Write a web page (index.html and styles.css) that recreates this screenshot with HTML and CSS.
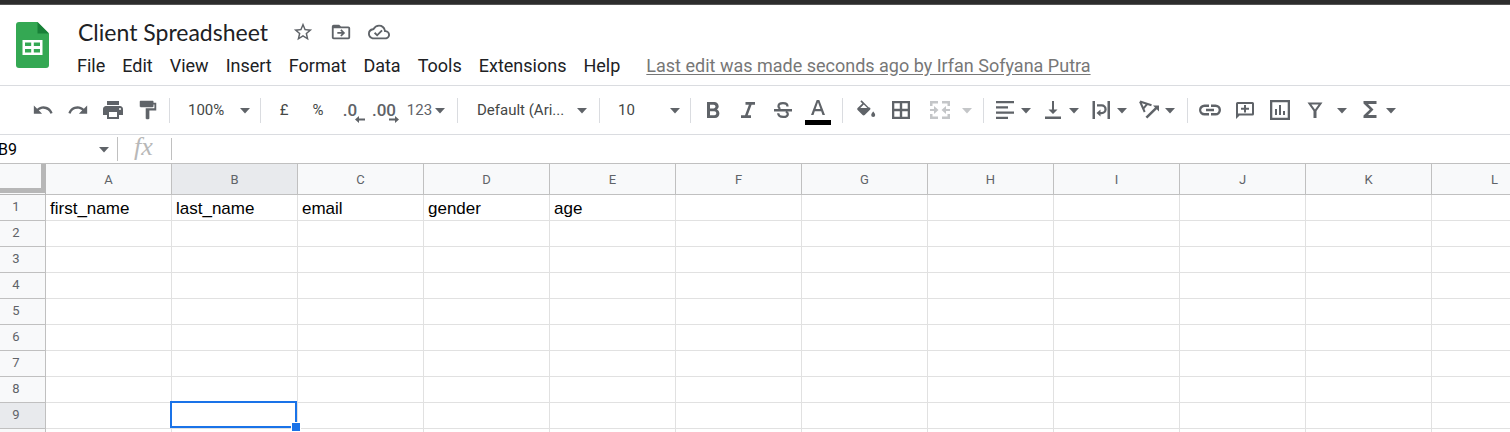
FILE: index.html
```
<!DOCTYPE html>
<html lang="en">
<head>
<meta charset="utf-8">
<title>Client Spreadsheet</title>
<link rel="stylesheet" href="styles.css">
</head>
<body>
<svg width="0" height="0" class="defs" aria-hidden="true">
  <symbol id="caret" viewBox="0 0 10 6"><path d="M0 0h10L5 5.5z"/></symbol>
</svg>
<div class="window-edge"></div>
<header class="header">
  <svg class="logo" viewBox="0 0 33 46" role="img" aria-label="Sheets">
    <path fill="#34a853" d="M3 0h18.500L33 11.500V43a3 3 0 0 1-3 3H3a3 3 0 0 1-3-3V3a3 3 0 0 1 3-3z"/>
    <path fill="#188038" d="M21.500 0L33 11.500H21.500z"/>
    <path fill="#fff" fill-rule="evenodd" d="M6.500 18h20v15h-20zM9 20.500v3.500h6.200v-3.500zM17.800 20.500v3.500H24v-3.500zM9 27v3.500h6.200V27zM17.800 27v3.500H24V27z"/>
  </svg>
  <div class="heading">
    <div class="title-row">
      <h1 class="title">Client Spreadsheet</h1>
      <button class="title-btn" aria-label="Star"><svg viewBox="0 0 24 24"><path d="M22 9.240l-7.190-.62L12 2 9.190 8.630 2 9.240l5.460 4.730L5.820 21 12 17.270 18.180 21l-1.630-7.030L22 9.240zM12 15.400l-3.760 2.270 1-4.280-3.320-2.880 4.380-.38L12 6.100l1.710 4.040 4.380.38-3.320 2.880 1 4.280L12 15.400z"/></svg></button>
      <button class="title-btn" aria-label="Move"><svg viewBox="0 0 24 24"><path d="M20 6h-8l-2-2H4a2 2 0 0 0-2 2v12a2 2 0 0 0 2 2h16a2 2 0 0 0 2-2V8a2 2 0 0 0-2-2zm0 12H4V8h16v10zm-7.500-1l4-4-4-4-1.300 1.300 1.700 1.700H8v2h4.900l-1.700 1.700z"/></svg></button>
      <button class="title-btn" aria-label="Document status"><svg viewBox="0 0 24 24"><path d="M19.350 10.040A7.490 7.490 0 0 0 12 4C9.110 4 6.600 5.640 5.350 8.040A5.994 5.994 0 0 0 0 14c0 3.310 2.690 6 6 6h13c2.760 0 5-2.240 5-5 0-2.640-2.050-4.780-4.650-4.960zM19 18H6c-2.210 0-4-1.790-4-4 0-2.050 1.530-3.760 3.560-3.970l1.070-.11.5-.95A5.469 5.469 0 0 1 12 6c2.620 0 4.880 1.860 5.390 4.430l.3 1.500 1.530.11A2.980 2.980 0 0 1 22 15c0 1.650-1.350 3-3 3zm-9-3.820l-2.090-2.090L6.500 13.500 10 17l6.010-6.010-1.410-1.410z"/></svg></button>
    </div>
    <nav class="menu">
      <button>File</button><button>Edit</button><button>View</button><button>Insert</button><button>Format</button><button>Data</button><button>Tools</button><button>Extensions</button><button>Help</button>
      <a class="last-edit" href="#">Last edit was made seconds ago by Irfan Sofyana Putra</a>
    </nav>
  </div>
</header>

<div class="toolbar" role="toolbar">
  <button class="tool" aria-label="Undo"><svg class="icon small" viewBox="0 0 24 24"><path d="M12.500 8c-2.650 0-5.050.99-6.900 2.600L2 7v9h9l-3.620-3.620c1.390-1.160 3.160-1.880 5.120-1.880 3.540 0 6.550 2.310 7.600 5.500l2.370-.78C21.080 11.030 17.150 8 12.500 8z"/></svg></button>
  <button class="tool" aria-label="Redo"><svg class="icon small" viewBox="0 0 24 24"><path d="M18.400 10.600C16.550 8.990 14.150 8 11.500 8c-4.650 0-8.580 3.030-9.960 7.220L3.900 16a8.002 8.002 0 0 1 7.600-5.500c1.950 0 3.730.72 5.120 1.880L13 16h9V7l-3.600 3.600z"/></svg></button>
  <button class="tool" aria-label="Print"><svg class="icon" viewBox="0 0 24 24"><path d="M19 8H5c-1.660 0-3 1.340-3 3v6h4v4h12v-4h4v-6c0-1.660-1.340-3-3-3zm-3 11H8v-5h8v5zm3-7a1 1 0 1 1 0-2 1 1 0 0 1 0 2zM18 3H6v4h12V3z"/></svg></button>
  <button class="tool" aria-label="Paint format"><svg class="icon small" viewBox="0 0 24 24"><path d="M18 4V3c0-.55-.45-1-1-1H4c-.55 0-1 .45-1 1v5c0 .55.450 1 1 1h13c.55 0 1-.45 1-1V6h1v4H9.500v11c0 .55.450 1 1 1h2c.55 0 1-.45 1-1v-8.500H21V4h-3z"/></svg></button>
  <span class="sep"></span>
  <button class="tool picker">100%<svg class="caret"><use href="#caret"/></svg></button>
  <span class="sep"></span>
  <div class="group numbers">
    <button class="tool">£</button>
    <button class="tool">%</button>
    <button class="tool decimals" aria-label="Decrease decimal places"><span>.0</span><svg class="arrow" viewBox="0 0 10 7"><path d="M10 2.500H4V0L0 3.500 4 7V4.500h6z"/></svg></button>
    <button class="tool decimals" aria-label="Increase decimal places"><span>.00</span><svg class="arrow" viewBox="0 0 10 7"><path d="M0 2.500h6V0l4 3.500L6 7V4.500H0z"/></svg></button>
  </div>
  <button class="tool formats">123<svg class="caret"><use href="#caret"/></svg></button>
  <span class="sep"></span>
  <button class="tool picker font">Default (Ari...<svg class="caret"><use href="#caret"/></svg></button>
  <span class="sep"></span>
  <button class="tool picker">10<svg class="caret"><use href="#caret"/></svg></button>
  <span class="sep"></span>
  <div class="group text-style">
    <button class="tool" aria-label="Bold"><svg class="icon" viewBox="0 0 24 24"><path d="M16 11.500c1-.7 1.700-1.800 1.700-2.900C17.700 6 15.800 4 13.200 4H6v16h8c2.500 0 4.400-2 4.400-4.500 0-1.800-1-3.300-2.400-4zM9 6.700h3.600c1 0 1.900.8 1.900 1.900s-.9 1.900-1.900 1.900H9zm4.300 10.600H9v-4h4.300c1.100 0 2 .9 2 2s-.9 2-2 2z"/></svg></button>
    <button class="tool" aria-label="Italic"><svg class="icon" viewBox="0 0 24 24"><path d="M9.500 4v2.700h3.400L9 17.300H5V20h10v-2.700h-3.300l3.900-10.600H19V4z"/></svg></button>
    <button class="tool" aria-label="Strikethrough"><svg class="icon" viewBox="0 0 24 24"><path d="M3 11h18v2.500H3z"/><path d="M16.500 8.500c0-2-1.700-3.300-4.500-3.300S7.500 6.500 7.500 8.300c0 1.300.6 2 1.700 2.700M14.800 13.500c1.300.5 2 1.200 2 2.400 0 1.800-1.900 3-4.600 3-3 0-4.900-1.300-5-3.600" fill="none" stroke="currentColor" stroke-width="2.300"/></svg></button>
    <button class="tool" aria-label="Text color"><svg class="icon tall" viewBox="0 0 26 30"><path d="M11.700 5L6 20h2.500l1.300-3.700h6.400l1.300 3.700H20L14.300 5h-2.600zm-1.100 9L13 7.300l2.400 6.700z"/><path fill="#000" d="M0 25h26v5H0z"/></svg></button>
  </div>
  <span class="sep"></span>
  <div class="group cell-style">
    <button class="tool" aria-label="Fill color"><svg class="icon" viewBox="0 0 24 24"><path d="M14.500 9.200L7.600 2.300 6.400 3.500l2 2L3.600 10a1.400 1.400 0 0 0 0 2l5 5c.6.600 1.500.6 2.100 0l5.300-5.200c.6-.6.6-1.400 0-2zM6.300 10l3.500-3.400L13.300 10zM19.200 13.500s-2 2.100-2 3.400a2 2 0 0 0 4 0c0-1.300-2-3.400-2-3.400z"/></svg></button>
    <button class="tool" aria-label="Borders"><svg class="icon" viewBox="0 0 24 24"><path d="M3 3v18h18V3H3zm7.800 15.700H5.300v-5.500h5.500v5.500zm0-7.900H5.300V5.300h5.500v5.500zm7.900 7.900h-5.500v-5.500h5.500v5.500zm0-7.900h-5.500V5.300h5.500v5.500z"/></svg></button>
    <button class="tool split merge" disabled aria-label="Merge cells"><svg class="icon" viewBox="0 0 24 24"><path d="M2 3h8v2.500H4.500V8H2zM14 3h8v5h-2.500V5.500H14zM2 16h2.500v2.500H10V21H2zM19.500 16H22v5h-8v-2.500h5.500zM2 11h4V8l4.500 4L6 16v-3H2zM22 11h-4V8l-4.500 4 4.500 4v-3h4z"/></svg><svg class="caret"><use href="#caret"/></svg></button>
  </div>
  <span class="sep"></span>
  <div class="group alignment">
    <button class="tool split" aria-label="Horizontal align"><svg class="icon" viewBox="0 0 24 24"><path d="M3 3h18v2.300H3zM3 8.200h12v2.300H3zM3 13.400h18v2.300H3zM3 18.700h12V21H3z"/></svg><svg class="caret"><use href="#caret"/></svg></button>
    <button class="tool split" aria-label="Vertical align"><svg class="icon" viewBox="0 0 24 24"><path d="M4 18.500h16V21H4zM11 3h2v8.500h3.500L12 16l-4.500-4.500H11z"/></svg><svg class="caret"><use href="#caret"/></svg></button>
    <button class="tool split" aria-label="Text wrapping"><svg class="icon" viewBox="0 0 24 24"><path d="M3.500 3H6v18H3.500zM18.500 3H21v18h-2.500zM7.500 15l4-3.500v2.400h1.200a2.700 2.700 0 0 0 0-5.400H8V6.200h4.700a5 5 0 0 1 0 10h-1.200v2.300z"/></svg><svg class="caret"><use href="#caret"/></svg></button>
    <button class="tool split" aria-label="Text rotation"><svg class="icon" viewBox="0 0 24 24"><path d="M3 3.500l11.500 3.800M3 3.500l4.700 10.500M10.300 5.900l-4.400 5.300" fill="none" stroke="currentColor" stroke-width="2"/><path d="M8.500 18.700l9.500-9.300-2-2h6v6l-2.200-2.200-9.500 9.300z"/></svg><svg class="caret"><use href="#caret"/></svg></button>
  </div>
  <span class="sep"></span>
  <button class="tool" aria-label="Insert link"><svg class="icon" viewBox="0 0 24 24"><path d="M3.200 12c0-1.700 1.600-3.100 3.300-3.100H11V6.500H6.500a5.500 5.500 0 0 0 0 11H11v-2.400H6.500c-1.700 0-3.300-1.400-3.300-3.100zM8 13.200h8v-2.400H8zM17.500 6.500H13v2.400h4.500a3.100 3.100 0 0 1 0 6.200H13v2.400h4.500a5.500 5.500 0 0 0 0-11z"/></svg></button>
  <button class="tool" aria-label="Insert comment"><svg class="icon" viewBox="0 0 24 24"><path d="M19.500 4h-15A1.500 1.500 0 0 0 3 5.500V21l3.500-3.500h13A1.500 1.500 0 0 0 21 16V5.500A1.500 1.500 0 0 0 19.500 4zM19 15.500H5V6h14zM11 14.500h2v-2.800h3v-2h-3V7h-2v2.700H8v2h3z"/></svg></button>
  <button class="tool" aria-label="Insert chart"><svg class="icon" viewBox="0 0 24 24"><path d="M7 11h2v6H7zM11 7h2v10h-2zM15 13h2v4h-2zM2 2v20h20V2zm17.700 17.700H4.300V4.300h15.400z"/></svg></button>
  <button class="tool split filter" aria-label="Filter"><svg class="icon" viewBox="0 0 24 24"><path d="M4.500 4.500h15L13.500 13v7h-3v-7zM8.400 6.600l3.600 5 3.600-5z"/></svg><svg class="caret"><use href="#caret"/></svg></button>
  <button class="tool split" aria-label="Functions"><svg class="icon" viewBox="0 0 24 24"><path d="M18.500 3H5.500v2.400l6.300 6.100-6.300 6.100V20h13v-3H10l5.500-5.500L10 6h8.500z"/></svg><svg class="caret"><use href="#caret"/></svg></button>
</div>

<div class="formula-bar">
  <label class="name-box"><input value="B9" aria-label="Name box"><svg class="caret"><use href="#caret"/></svg></label>
  <label class="fx" for="formula">fx</label>
  <input class="formula" id="formula">
</div>

<main class="sheet">
  <table class="grid">
    <colgroup><col class="row-col"><col span="12"></colgroup>
    <thead>
      <tr><td class="corner"></td><th>A</th><th class="active">B</th><th>C</th><th>D</th><th>E</th><th>F</th><th>G</th><th>H</th><th>I</th><th>J</th><th>K</th><th>L</th></tr>
    </thead>
    <tbody>
      <tr><th>1</th><td>first_name</td><td>last_name</td><td>email</td><td>gender</td><td>age</td><td></td><td></td><td></td><td></td><td></td><td></td><td></td></tr>
      <tr><th>2</th><td></td><td></td><td></td><td></td><td></td><td></td><td></td><td></td><td></td><td></td><td></td><td></td></tr>
      <tr><th>3</th><td></td><td></td><td></td><td></td><td></td><td></td><td></td><td></td><td></td><td></td><td></td><td></td></tr>
      <tr><th>4</th><td></td><td></td><td></td><td></td><td></td><td></td><td></td><td></td><td></td><td></td><td></td><td></td></tr>
      <tr><th>5</th><td></td><td></td><td></td><td></td><td></td><td></td><td></td><td></td><td></td><td></td><td></td><td></td></tr>
      <tr><th>6</th><td></td><td></td><td></td><td></td><td></td><td></td><td></td><td></td><td></td><td></td><td></td><td></td></tr>
      <tr><th>7</th><td></td><td></td><td></td><td></td><td></td><td></td><td></td><td></td><td></td><td></td><td></td><td></td></tr>
      <tr><th>8</th><td></td><td></td><td></td><td></td><td></td><td></td><td></td><td></td><td></td><td></td><td></td><td></td></tr>
      <tr><th class="active">9</th><td></td><td class="selected"></td><td></td><td></td><td></td><td></td><td></td><td></td><td></td><td></td><td></td><td></td></tr>
      <tr><th></th><td></td><td></td><td></td><td></td><td></td><td></td><td></td><td></td><td></td><td></td><td></td><td></td></tr>
    </tbody>
  </table>
</main>
</body>
</html>
```
FILE: styles.css
```
*, *::before, *::after { box-sizing: border-box; }

body {
  display: flex;
  flex-direction: column;
  height: 100vh;
  margin: 0;
  overflow: hidden;
  background: #fff;
  color: #202124;
  font-family: Roboto, "Liberation Sans", sans-serif;
}

.defs { position: absolute; }

button {
  margin: 0;
  padding: 0;
  border: 0;
  background: none;
  color: inherit;
  font: inherit;
  white-space: nowrap;
}

svg { display: block; flex: none; fill: currentColor; }

.window-edge {
  flex: none;
  height: 5px;
  background: #2d2d2d;
  border-bottom: 1px solid #555;
}

/* Title and menus */
.header {
  display: flex;
  flex: none;
  align-items: flex-start;
  height: 81px;
  padding-left: 16px;
  border-bottom: 1px solid #dadce0;
}

.logo { width: 33px; height: 46px; margin-top: 17px; }

.heading { padding: 10px 0 0 28px; }

.title-row { display: flex; align-items: center; height: 34px; color: #5f6368; }

.title {
  margin: 0 24px 0 1px;
  color: #202124;
  font: 400 23px/34px Lato, sans-serif;
}

.title-btn { margin-right: 16px; }
.title-btn svg { width: 22px; height: 22px; }

.menu { display: flex; align-items: center; gap: 17px; height: 32px; font-size: 18px; }

.last-edit { margin-left: 9px; color: #777; text-underline-offset: 2px; white-space: nowrap; }

/* Toolbar */
.toolbar {
  display: flex;
  flex: none;
  align-items: center;
  height: 49px;
  padding-left: 25px;
  border-bottom: 1px solid #dadce0;
  color: #5f6368;
  font-size: 15px;
}

.tool {
  display: flex;
  flex: none;
  align-items: center;
  justify-content: center;
  width: 35px;
  height: 34px;
}

.sep { flex: none; width: 1px; height: 25px; margin: 0 4px; background: #dadce0; }
.group { display: flex; flex: none; }
.icon { width: 24px; height: 24px; }
.icon.small { width: 22px; height: 22px; }
.icon.tall { width: 26px; height: 30px; }
.caret { width: 10px; height: 6px; margin-top: 2px; }

.picker { justify-content: space-between; width: 82px; padding: 0 6px 0 14px; color: #444746; }
.picker.font { width: 133px; padding: 0 8px 0 15px; }
.picker .caret { color: #5f6368; }
.numbers { padding-left: 2px; color: #444746; }
.numbers .tool { width: 34px; }
.decimals { position: relative; padding-right: 4px; color: #5f6368; font-size: 17px; font-weight: 500; }
.decimals .arrow { position: absolute; right: 4px; bottom: 4px; width: 10px; height: 7px; }
.formats { gap: 3px; width: 50px; padding-right: 4px; }
.text-style { padding-right: 3px; }
.cell-style { padding-left: 1px; }
.alignment { padding-right: 3px; }

.split { justify-content: flex-start; gap: 4px; width: 48px; padding-left: 5px; }
.merge { gap: 10px; width: 61px; padding-left: 10px; color: #c4c6c8; }
.filter { gap: 10px; width: 56px; padding-left: 6px; }

/* Formula bar */
.formula-bar { display: flex; flex: none; align-items: center; height: 29px; border-bottom: 1px solid #c0c0c0; }

.formula-bar input { min-width: 0; padding: 0; border: 0; outline: 0; background: none; color: #000; font: 400 16px Roboto, sans-serif; }

.name-box {
  display: flex;
  align-items: center;
  justify-content: space-between;
  width: 118px;
  height: 24px;
  padding-right: 8px;
  border-right: 1px solid #c0c0c0;
  color: #5f6368;
}

.name-box input { width: 80px; margin-left: -2px; }

.fx {
  width: 53px;
  padding: 0 2px 4px 0;
  color: #b8b8b8;
  font: italic 26px/24px "Liberation Serif", serif;
  text-align: center;
}

.formula-bar .formula { flex: 1; height: 22px; padding-left: 5px; border-left: 1px solid #c0c0c0; }

/* Grid */
.sheet { flex: 1; min-height: 0; overflow: hidden; }

.grid { width: 1558px; border-spacing: 0; table-layout: fixed; }
.row-col { width: 46px; }

.grid th {
  padding: 0;
  border: solid #c0c0c0;
  border-width: 0 1px 1px 0;
  background: #f8f9fa;
  color: #5f6368;
  font-size: 13px;
  font-weight: 400;
}

.grid thead th, .grid .corner { height: 31px; }
.grid tbody th { padding: 0 13px 2px 0; }
.grid th.active { background: #e8eaed; }

.grid .corner {
  padding: 0;
  border: solid #b7b7b7;
  border-width: 0 1px 1px 0;
  background: #f8f9fa;
  box-shadow: inset 0 -1px #f8f9fa, inset -4px -6px #b7b7b7;
}

.grid tbody td {
  height: 26px;
  padding: 2px 0 0 4px;
  border: solid #e1e1e1;
  border-width: 0 1px 1px 0;
  color: #000;
  font: 17px/20px "Liberation Sans", Arial, sans-serif;
}

.grid .selected { position: relative; }

.selected::before {
  content: "";
  position: absolute;
  top: -2px;
  left: -2px;
  width: 127px;
  height: 27px;
  border: 2px solid #1a73e8;
}

.selected::after {
  content: "";
  position: absolute;
  right: -4px;
  bottom: -4px;
  width: 10px;
  height: 10px;
  border: 1px solid #fff;
  background: #1a73e8;
}
```
